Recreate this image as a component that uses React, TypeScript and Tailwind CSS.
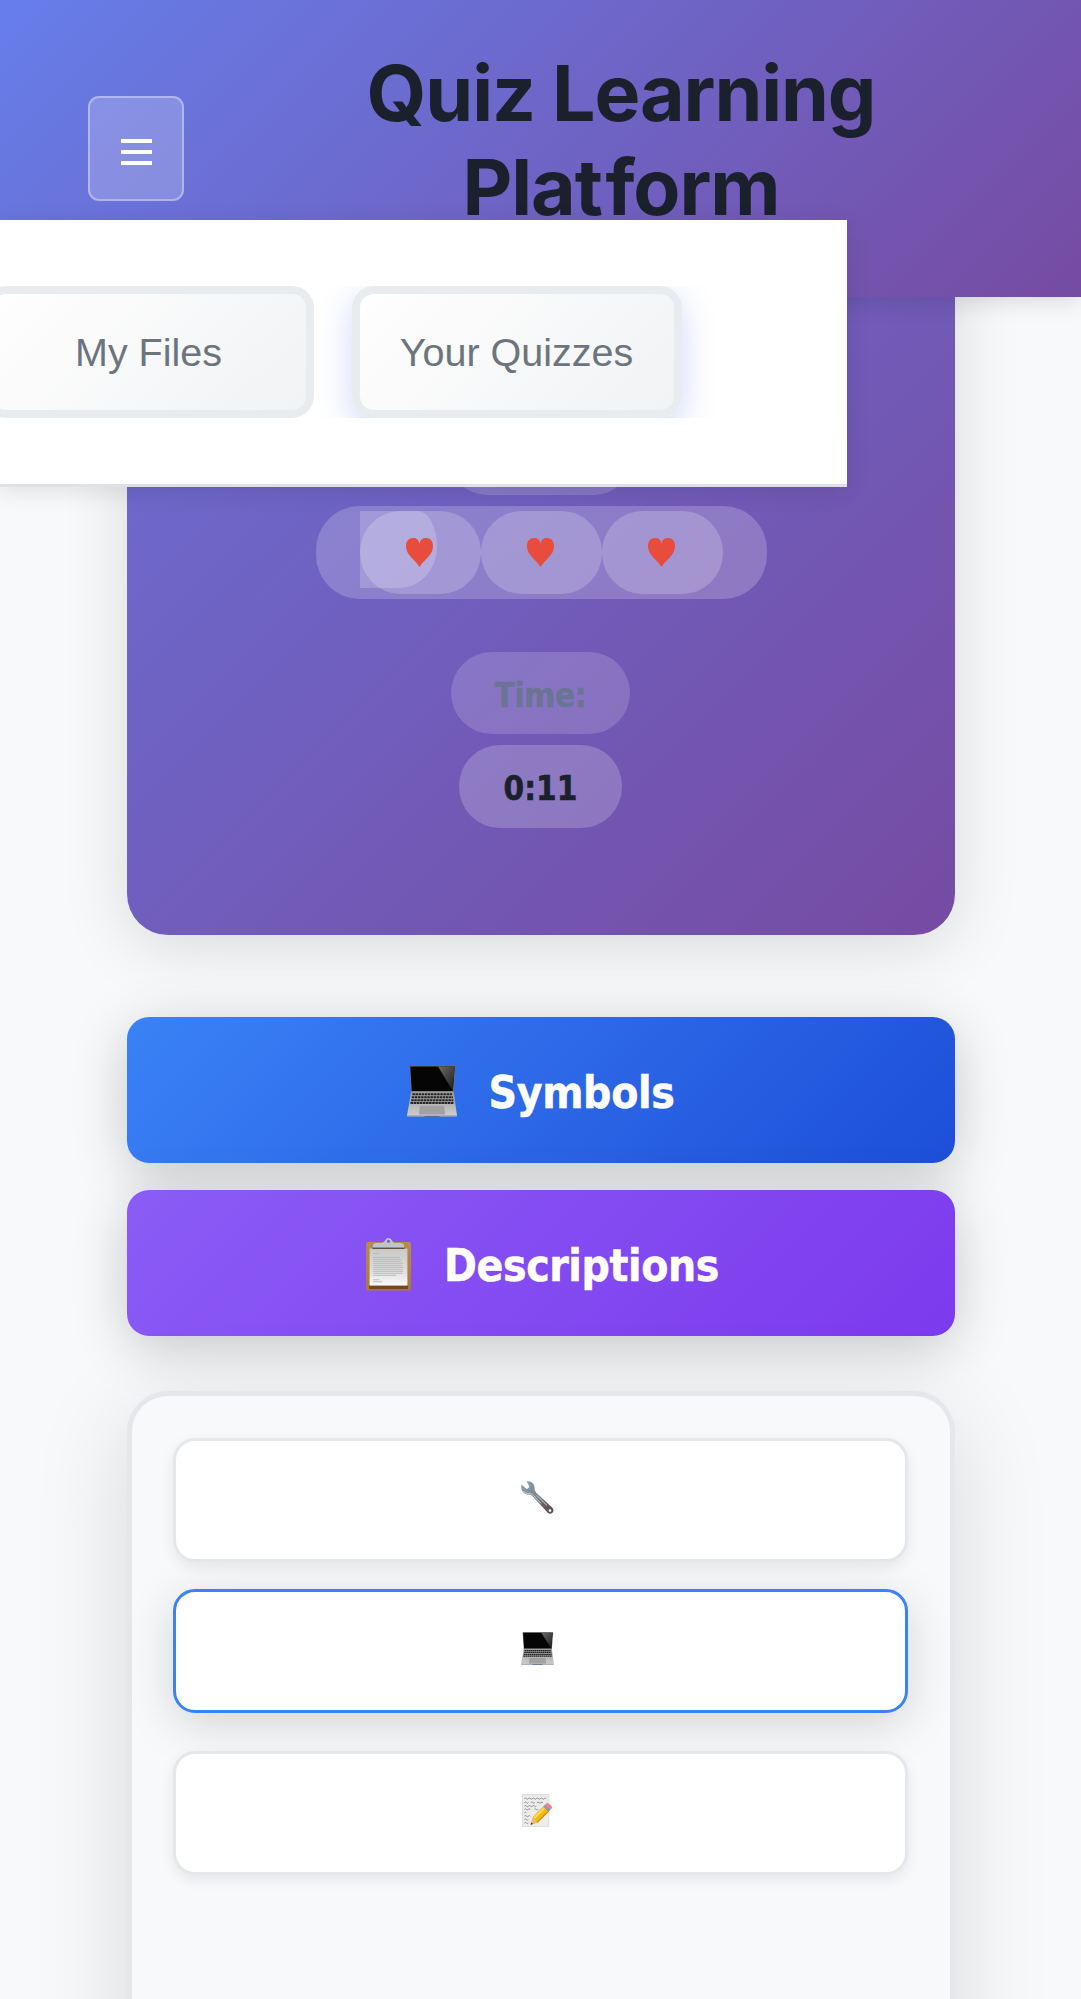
import type { ReactNode } from "react";

function Laptop({ className }: { className: string }) {
  return (
    <svg className={className} viewBox="0 0 50 52" preserveAspectRatio="none">
      <defs>
        <linearGradient id="lapGlare" x1="0" y1="0" x2="1" y2="1">
          <stop offset="0" stopColor="#6b6b6b" />
          <stop offset="1" stopColor="#1a1a1a" />
        </linearGradient>
        <linearGradient id="lapBase" x1="0" y1="0" x2="0" y2="1">
          <stop offset="0" stopColor="#9b9b9b" />
          <stop offset="1" stopColor="#cfcfcf" />
        </linearGradient>
      </defs>
      <path d="M2.4 0.6Q2.4 0 3.4 0H47.6Q48.8 0 48.7 0.8L46.8 27H4.2Z" fill="#6d6c6c" />
      <path d="M3.3 1.5H47.7L45.8 26H4.8Z" fill="#050505" />
      <path d="M31 1.5H47.7L45.8 26Z" fill="url(#lapGlare)" />
      <path d="M4.2 26.5H46.6L50 50.5Q50 51.5 49 51.5H1Q0 51.5 0 50.5Z" fill="url(#lapBase)" />
      <path d="M5 28H45.6L47.4 38.8H2.8Z" fill="#a5a5a5" />
      <path
        d="M5.4 29.2H45.4M4.8 32.2H46M4.2 35.2H46.4M3.5 38H47"
        stroke="#252525"
        strokeWidth="1.9"
        strokeDasharray="2.5 .6"
      />
      <path d="M12.8 40.8H37.2L38 49.6H12Z" fill="#a1a1a1" />
      <path d="M0.6 51H49.4" stroke="#808080" strokeWidth=".8" />
      <path d="M17 51H33L32 52H18Z" fill="#5d6f91" />
    </svg>
  );
}

function Clipboard({ className }: { className: string }) {
  return (
    <svg className={className} viewBox="0 0 45 53" preserveAspectRatio="none">
      <defs>
        <linearGradient id="paper" x1="0" y1="0" x2="0" y2="1">
          <stop offset="0" stopColor="#c9c9c9" />
          <stop offset=".6" stopColor="#dedede" />
          <stop offset="1" stopColor="#fafafa" />
        </linearGradient>
        <linearGradient id="board" x1="0" y1="0" x2="0" y2="1">
          <stop offset="0" stopColor="#b98a50" />
          <stop offset="1" stopColor="#a87840" />
        </linearGradient>
      </defs>
      <rect x="0" y="4" width="45" height="48.6" rx="2.6" fill="url(#board)" />
      <path d="M3 47.5H42V51H3Z" fill="#72481f" />
      <path d="M3.6 10.5H41.4V47.5H3.6Z" fill="url(#paper)" />
      <path d="M6.5 9.2H38.5V11H6.5Z" fill="#5f503f" />
      <path d="M6.8 9.4V8Q7 5 10.5 5H16Q18.5 4.2 19 2.6Q20 0 22.5 0Q25 0 26 2.6Q26.5 4.2 29 5H34.5Q38 5 38.2 8V9.4Z" fill="#bfc4cb" />
      <circle cx="22.5" cy="3.2" r="1.5" fill="#7557cf" />
      <path
        d="M7 15.6H13M7 19.3H34M7 21.3H35.5M7 23.3H35M7 25.3H37M7 27.3H36M7 29.3H37.5M7 31.3H36.5M7 33.3H37M7 35.3H36.5M7 37.3H30M7 41.8H13.5M7 43.8H16"
        stroke="#b8b8b8"
        strokeWidth=".9"
      />
    </svg>
  );
}

function Wrench({ className }: { className: string }) {
  return (
    <svg className={className} viewBox="0 0 33 33">
      <defs>
        <linearGradient id="steel" x1="0" y1="0" x2="1" y2="1">
          <stop offset="0" stopColor="#8fa3b1" />
          <stop offset=".45" stopColor="#7b8790" />
          <stop offset=".75" stopColor="#6a5a5e" />
          <stop offset="1" stopColor="#54474b" />
        </linearGradient>
      </defs>
      <path
        d="M0.7 3.6L4.6 7.2Q6 8.3 7.3 7.3Q8.7 6.1 7.9 4.6L5.6 0.5Q9.3 -0.3 11.9 2.3Q14.2 4.8 13.6 8.6Q14 10.4 15.5 12L30.6 26.1Q33.3 28.4 32 31Q30.3 33.8 27 32L11.6 15.2Q9.9 13.7 8 13.6Q4.4 14 2 11.3Q-0.6 8 0.7 3.6Z"
        fill="url(#steel)"
      />
      <path d="M2 10Q4.6 13 8 12.4Q10.8 12.6 12.6 14.6L20 22.4" fill="none" stroke="#c1d0d9" strokeWidth="1" />
      <path d="M15.6 14.2L26 24.4" stroke="#a5adb4" strokeWidth="1.3" />
      <circle cx="29" cy="29.6" r="1.3" fill="#fff" />
    </svg>
  );
}

function Memo({ className }: { className: string }) {
  return (
    <svg className={className} viewBox="0 0 30 33">
      <rect x=".3" y=".3" width="26.6" height="32" fill="#ececec" stroke="#d3d3d3" strokeWidth=".6" />
      <path
        d="M2.4 4.6q1-1.2 2 0t2 0 2 0 2 0 2 0 2 0 2 0 2 0 2 0 2 0 2 0M2.4 8.6q1-1.2 2 0t2 0M8.8 8.6q1-1.2 2 0t2 0M15 8.6q1-1.2 2 0t2 0 2 0M2.4 12.1q1-1.2 2 0t2 0 2 0 2 0 2 0 2 0M2.4 15.4q1-1.2 2 0t2 0 2 0M12.4 15.4q1-1.2 2 0t2 0M2.4 18.7q1-1.2 2 0M2.4 22.2q1-1.2 2 0t2 0 2 0M2.4 25.6q1-1.2 2 0t2 0M2.4 29q1-1.2 2 0t2 0"
        fill="none"
        stroke="#7a7a7a"
        strokeWidth=".8"
      />
      <path d="M8.6 30.8L11 22.8L21.6 12L27 17.4L16 28.4Z" fill="#f5b912" />
      <path d="M12.4 24L23 13.4" stroke="#ffe05e" strokeWidth="1.8" />
      <path d="M15 28.6L26.4 17.2" stroke="#c98a10" strokeWidth="1.2" />
      <path d="M8.6 30.8L10.8 23.6L15.6 28.5Z" fill="#e9bd83" />
      <path d="M8.6 30.8L9.3 28.4L11 30Z" fill="#2c2c2c" />
      <path d="M21.2 12.6L23.4 10.3L28.7 15.6L26.5 17.9Z" fill="#8d98a5" />
      <path d="M23.2 10.5L24.6 9.2Q26 8.6 27.6 10.2L29.2 11.8Q30.4 13.2 29.6 14.4L28.5 15.7Z" fill="#f0808a" />
    </svg>
  );
}

function Heart() {
  return (
    <svg className="relative h-[29px] w-[27px]" viewBox="0 0 27 29">
      <path
        d="M13.5 29C12 26.2 9.2 23.6 5.8 20C2 15.8 0 12.6 0 8.2C0 3 2.6 0 7.2 0C10.8 0 12.9 2 13.5 5.6C14.1 2 16.2 0 19.8 0C24.4 0 27 3 27 8.2C27 12.6 25 15.8 21.2 20C17.8 23.6 15 26.2 13.5 29Z"
        fill="#e74c3c"
      />
    </svg>
  );
}

function Life({ children }: { children?: ReactNode }) {
  return (
    <div className="relative flex h-[83px] w-[121px] items-center justify-center rounded-[41px] bg-white/20 pr-[2px]">
      {children}
      <Heart />
    </div>
  );
}

function Tab({ label, className = "" }: { label: string; className?: string }) {
  return (
    <button
      className={`h-[132px] w-[330px] shrink-0 rounded-[22px] border-8 border-[#e9ecef] bg-linear-[135deg,#ffffff,#f1f2f4] bg-origin-border pt-[2px] text-[39.5px] text-[#6c757d] ${className}`}
    >
      {label}
    </button>
  );
}

function Option({ children, className }: { children: ReactNode; className: string }) {
  return (
    <div className={`flex h-[124px] shrink-0 items-center justify-center rounded-[22px] border-3 bg-white pr-[7px] pb-[5px] ${className}`}>
      {children}
    </div>
  );
}

export default function App() {
  return (
    <div className="relative h-[1999px] w-[1081px] overflow-hidden bg-[#f8f9fb] font-['DejaVu_Sans_Condensed','DejaVu_Sans',sans-serif] text-[#1a202c]">
      <main className="-mt-[465px] flex w-full flex-col pl-[126.5px] pr-[126.5px]">
        <section className="flex h-[1400px] shrink-0 flex-col items-center rounded-[41px] bg-linear-[135deg,#667eea,#764ba2] pt-[878px] shadow-[0_11px_66px_rgba(0,0,0,0.13)]">
          <div className="h-[82px] w-[187px] shrink-0 rounded-[41px] bg-white/16" />
          <div className="mt-[11px] ml-[2px] flex h-[93px] w-[451px] shrink-0 items-center justify-center rounded-[44px] bg-white/20">
            <Life>
              <div className="absolute left-0 top-0 h-[77px] w-[77px] bg-white/20 [border-radius:0_19px_38px_0/0_36px_41px_0]" />
            </Life>
            <Life />
            <Life />
          </div>
          <div className="mt-[53px] flex h-[82px] w-[179px] shrink-0 items-center justify-center rounded-[41px] bg-white/16 text-[33px] font-bold tracking-[-0.3px] text-[#6b7494] [-webkit-text-stroke:0.5px_#6b7494]">
            <span className="pt-[5px]">Time:</span>
          </div>
          <div className="mt-[11px] flex h-[83px] w-[163px] shrink-0 items-center justify-center rounded-[41px] bg-white/20 text-[33px] font-bold [-webkit-text-stroke:0.5px_#1a202c]">
            <span className="pt-[4px]">0:11</span>
          </div>
        </section>

        <button className="mt-[82px] flex h-[146px] shrink-0 items-center justify-center gap-[31px] rounded-[22px] bg-linear-[135deg,#3b82f6,#1d4ed8] pl-[1px] pt-[2px] text-[44px] font-bold tracking-[-0.3px] text-white shadow-[0_11px_55px_rgba(0,0,0,0.2)] [-webkit-text-stroke:0.5px_white]">
          <Laptop className="h-[52px] w-[50px]" />
          <span className="pt-[4px] leading-[60px]">Symbols</span>
        </button>
        <button className="mt-[27px] flex h-[146px] shrink-0 items-center justify-center gap-[33px] rounded-[22px] bg-linear-[135deg,#8b5cf6,#7c3aed] pl-[4px] pt-[2px] text-[44px] font-bold tracking-[-0.4px] text-white shadow-[0_11px_55px_rgba(0,0,0,0.2)] [-webkit-text-stroke:0.5px_white]">
          <Clipboard className="h-[53px] w-[45px]" />
          <span className="pt-[4px] leading-[60px]">Descriptions</span>
        </button>

        <section className="mt-[55px] flex h-[800px] shrink-0 flex-col rounded-[41px] border-[5.5px] border-[#e5e7eb] bg-[#f8f9fb] px-[41.5px] pt-[42px] shadow-[0_22px_96px_rgba(0,0,0,0.13)]">
          <Option className="border-[#e5e7eb] shadow-[0_5px_14px_rgba(0,0,0,0.08)]">
            <Wrench className="size-[33px]" />
          </Option>
          <Option className="mt-[27px] border-[#3b82f6] shadow-[0_11px_48px_rgba(0,0,0,0.15)]">
            <Laptop className="h-[33px] w-[33px]" />
          </Option>
          <Option className="mt-[38px] border-[#e5e7eb] shadow-[0_5px_14px_rgba(0,0,0,0.08)]">
            <Memo className="h-[33px] w-[30px]" />
          </Option>
        </section>
      </main>

      <header className="absolute inset-x-0 top-0 flex h-[297px] items-center bg-linear-[135deg,#667eea,#764ba2] pl-[88px] shadow-[0_5px_22px_rgba(0,0,0,0.12)]">
        <button className="flex h-[105px] w-[96px] shrink-0 flex-col items-center justify-center gap-[7px] rounded-[11px] border-2 border-white/35 bg-white/20 pt-[7px]">
          <span className="h-1 w-[31px] bg-white" />
          <span className="h-1 w-[31px] bg-white" />
          <span className="h-1 w-[31px] bg-white" />
        </button>
        <h1 className="ml-[137px] w-[600px] pb-[18px] text-center font-['Inter',sans-serif] text-[77px] font-bold leading-[94px] tracking-[-1.1px]">
          Quiz Learning Pla<span className="tracking-[2.5px]">t</span>form
        </h1>
      </header>

      <nav className="absolute left-0 top-[220px] flex h-[267px] w-[847px] items-center border-b-3 border-[#dee2e6] bg-white font-['Liberation_Sans',Arial,sans-serif] shadow-[0_5px_22px_rgba(0,0,0,0.1)]">
        <div className="flex h-[132px] w-full gap-[38px] overflow-hidden">
          <Tab label="My Files" className="-ml-[16.5px]" />
          <Tab label="Your Quizzes" className="shadow-[0_11px_33px_rgba(102,126,234,0.3)]" />
        </div>
      </nav>
    </div>
  );
}
